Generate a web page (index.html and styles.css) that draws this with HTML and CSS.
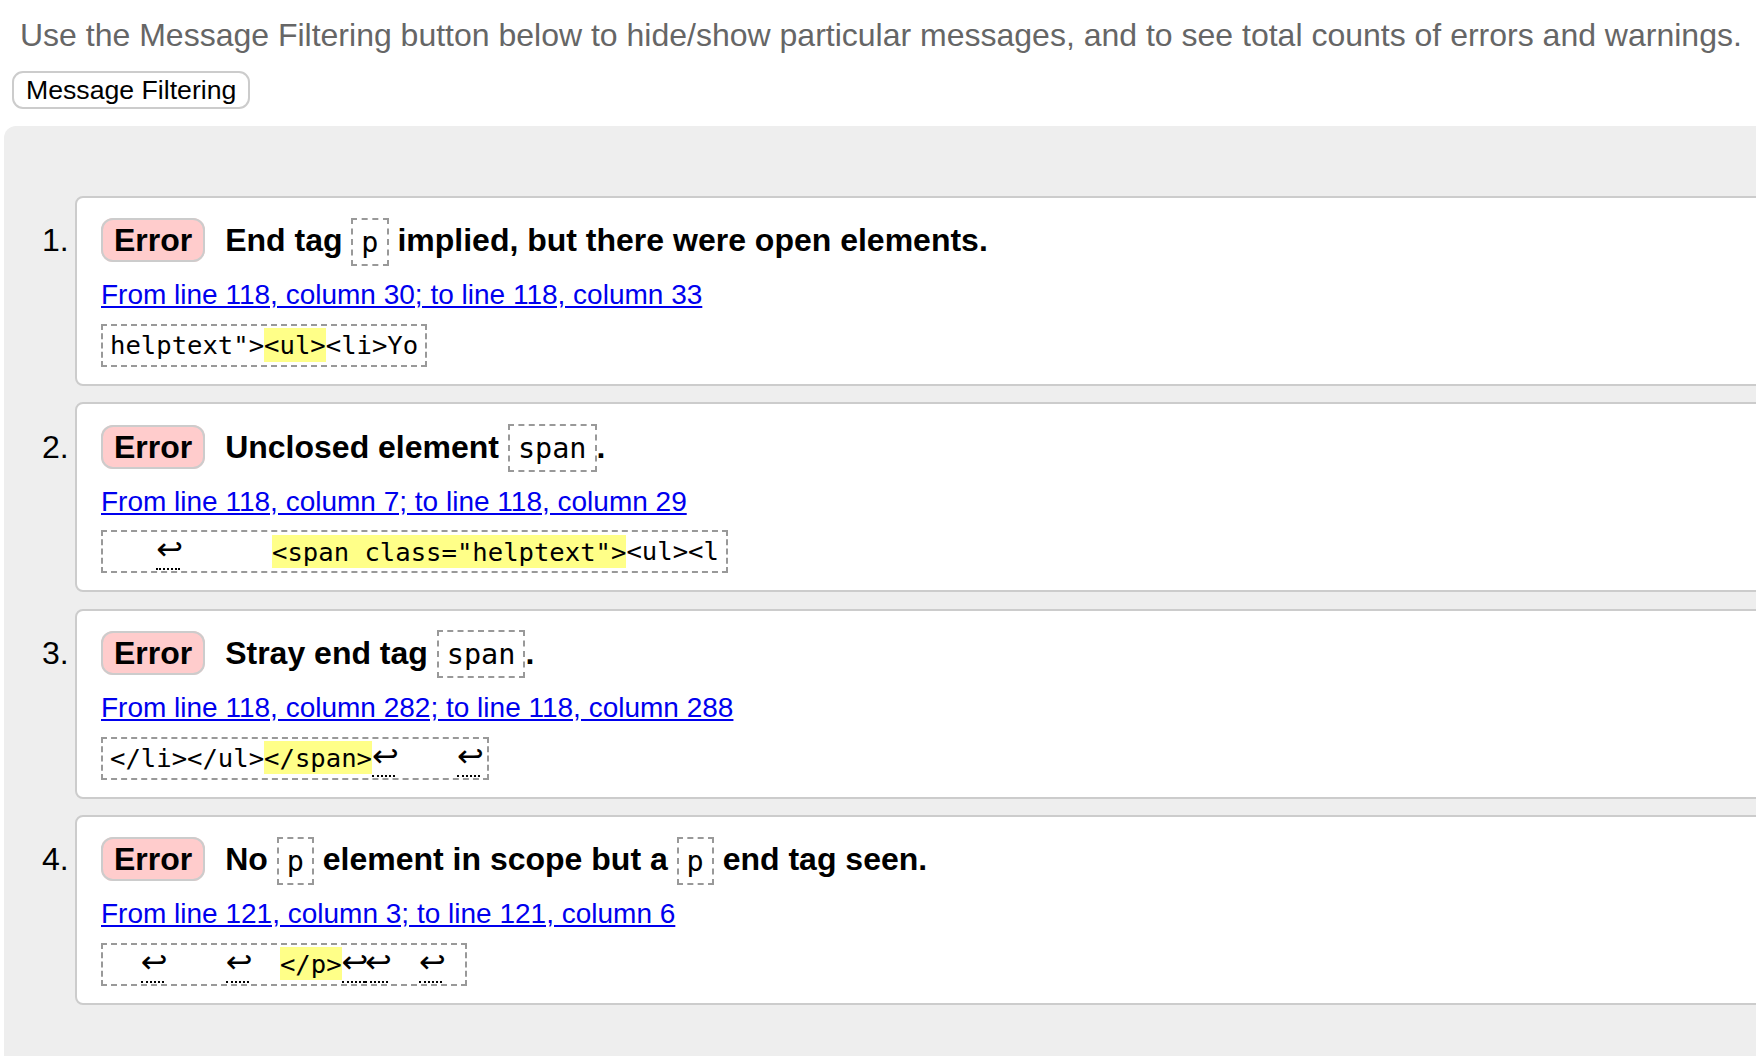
FILE: index.html
```html
<!DOCTYPE html>
<html lang="en">
<head>
<meta charset="utf-8">
<title>Validation results</title>
<link rel="stylesheet" href="styles.css">
</head>
<body>
<p class="intro">Use the Message Filtering button below to hide/show particular messages, and to see total counts of errors and warnings.</p>
<button class="filter-btn" type="button">Message Filtering</button>
<div class="results">
  <ol class="messages">
    <li class="msg">
      <p class="msg-title"><strong class="badge">Error</strong> <span>End tag <code>p</code> implied, but there were open elements.</span></p>
      <p class="msg-loc"><a href="#l118c30">From line 118, column 30; to line 118, column 33</a></p>
      <p class="msg-extract"><code>helptext"&gt;<b>&lt;ul&gt;</b>&lt;li&gt;Yo</code></p>
    </li>
    <li class="msg">
      <p class="msg-title"><strong class="badge">Error</strong> <span>Unclosed element <code>span</code>.</span></p>
      <p class="msg-loc"><a href="#l118c7">From line 118, column 7; to line 118, column 29</a></p>
      <p class="msg-extract"><code>   <span class="lf" title="Line break">↩</span>      <b>&lt;span class="helptext"&gt;</b>&lt;ul&gt;&lt;l</code></p>
    </li>
    <li class="msg">
      <p class="msg-title"><strong class="badge">Error</strong> <span>Stray end tag <code>span</code>.</span></p>
      <p class="msg-loc"><a href="#l118c282">From line 118, column 282; to line 118, column 288</a></p>
      <p class="msg-extract"><code>&lt;/li&gt;&lt;/ul&gt;<b>&lt;/span&gt;</b><span class="lf" title="Line break">↩</span>    <span class="lf" title="Line break">↩</span></code></p>
    </li>
    <li class="msg">
      <p class="msg-title"><strong class="badge">Error</strong> <span>No <code>p</code> element in scope but a <code>p</code> end tag seen.</span></p>
      <p class="msg-loc"><a href="#l121c3">From line 121, column 3; to line 121, column 6</a></p>
      <p class="msg-extract"><code>  <span class="lf" title="Line break">↩</span>    <span class="lf" title="Line break">↩</span>  <b>&lt;/p&gt;</b><span class="lf" title="Line break">↩</span><span class="lf" title="Line break">↩</span>  <span class="lf" title="Line break">↩</span> </code></p>
    </li>
  </ol>
</div>
</body>
</html>
```

FILE: styles.css
```css
html, body {
  margin: 0;
  padding: 0;
  overflow: hidden;
  background: #fff;
}

body {
  font-family: "Liberation Sans", Arial, sans-serif;
  font-size: 32px;
  color: #000;
}

.intro {
  margin: 0;
  padding: 17px 0 0 20px;
  color: #666;
  white-space: nowrap;
}

.filter-btn {
  display: block;
  box-sizing: border-box;
  height: 38px;
  margin: 17px 0 0 12px;
  padding: 0 12px;
  font-family: "Liberation Sans", Arial, sans-serif;
  font-size: 26.67px;
  color: #000;
  background: #fff;
  border: 2px solid #ccc;
  border-radius: 11px;
}

.results {
  margin: 17px -80px 0 4px;
  padding: 70px 0 60px 71px;
  background: #eee;
  border-top-left-radius: 12px;
}

.messages {
  margin: 0;
  padding: 0;
  list-style: decimal outside;
}

.msg {
  margin: 0 0 16.2px 0;
  padding: 24.4px 24px 17px 24px;
  background: #fff;
  border: 2px solid #ccc;
  border-radius: 8px;
}

.msg::marker {
  content: counter(list-item) ".\2009";
}

.msg-title {
  margin: 0;
  font-weight: bold;
}

.badge {
  margin-right: 11px;
  padding: 2px 11px;
  background: #fcc;
  border: 2px solid #ccc;
  border-radius: 12px;
}

.msg-title code {
  font-family: "DejaVu Sans Mono", monospace;
  font-size: 28.5px;
  font-weight: normal;
  padding: 5.5px 8px;
  border: 2px dashed #999;
}

.msg-loc {
  margin: 20.1px 0 0 0;
  font-size: 28px;
}

.msg-loc a {
  color: #00e;
  text-decoration: underline;
}

.msg-extract {
  display: flex;
  margin: 12.6px 0 0 0;
}

.msg-extract code {
  font-family: "DejaVu Sans Mono", monospace;
  font-size: 25.6px;
  line-height: 33px;
  padding: 3px 7px;
  border: 2px dashed #999;
  white-space: pre;
  color: #000;
}

.msg-extract b {
  font-weight: normal;
  background: #ff8;
  padding: 1.6px 0;
}

.lf {
  font-family: "DejaVu Sans", sans-serif;
  font-size: 32px;
  line-height: 0;
  letter-spacing: -3.5px;
  border-bottom: 2px dotted #000;
}
```
